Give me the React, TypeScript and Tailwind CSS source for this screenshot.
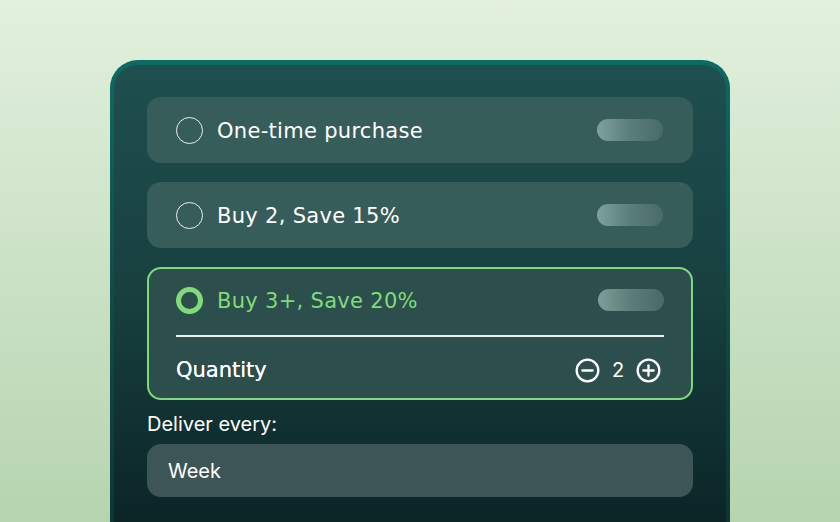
import { useState } from "react";

type Plan = { id: string; label: string };

const plans: Plan[] = [
  { id: "once", label: "One-time purchase" },
  { id: "two", label: "Buy 2, Save 15%" },
  { id: "three", label: "Buy 3+, Save 20%" },
];

function Radio({ active }: { active: boolean }) {
  return active ? (
    <span className="block h-[27px] w-[27px] shrink-0 rounded-full border-[5px] border-[#7fdc78]" />
  ) : (
    <span className="block h-[27px] w-[27px] shrink-0 rounded-full border-[1.5px] border-white/90" />
  );
}

function Shimmer() {
  return (
    <span className="block h-[22px] w-[66px] shrink-0 rounded-full bg-gradient-to-r from-[#86a9a3] via-[#5f827e] to-[#4a6d6a] opacity-90" />
  );
}

function CircleIcon({ plus }: { plus?: boolean }) {
  return (
    <svg width="25" height="25" viewBox="0 0 24 24" fill="none" stroke="white" strokeWidth="2.2" strokeLinecap="round">
      <circle cx="12" cy="12" r="10.4" />
      <path d="M7 12h10" />
      {plus && <path d="M12 7v10" />}
    </svg>
  );
}

export default function App() {
  const [selected, setSelected] = useState("three");
  const [qty, setQty] = useState(2);

  return (
    <main className="min-h-screen h-[522px] overflow-hidden bg-gradient-to-b from-[#e2f0dd] to-[#b6d4b0] px-[110px] pt-[60px] font-['Inter',sans-serif]">
      <div className="h-[480px] rounded-t-[28px] bg-gradient-to-b from-[#0b6b63] via-[#0f4b48] to-[#0d3433] px-[4px] pt-[5px]">
        <div className="flex h-full flex-col gap-[19px] rounded-t-[24px] bg-gradient-to-b from-[#1f4f4f] via-[#173f3e] to-[#0a2325] px-[33px] pt-[32px]">
          {plans.map((p) => {
            const active = p.id === selected;
            if (!active) {
              return (
                <button
                  key={p.id}
                  onClick={() => setSelected(p.id)}
                  className="flex h-[66px] items-center rounded-[14px] bg-[#375d5b] pl-[29px] pr-[30px] text-left"
                >
                  <Radio active={false} />
                  <span className="ml-[14px] flex-1 pt-[3px] font-['DejaVu_Sans',sans-serif] text-[21px] text-white tracking-[0.3px]">
                    {p.label}
                  </span>
                  <Shimmer />
                </button>
              );
            }
            return (
              <div
                key={p.id}
                className="flex flex-col rounded-[14px] border-2 border-[#7fd87a] bg-[#2c4e4c] px-[27px]"
              >
                <div className="flex h-[68px] items-center border-b-2 border-[#e6efe9] pb-[4px]">
                  <Radio active />
                  <span className="ml-[14px] flex-1 pt-[3px] font-['DejaVu_Sans',sans-serif] text-[21px] text-[#7fdc78] tracking-[0.3px]">
                    {p.label}
                  </span>
                  <Shimmer />
                </div>
                <div className="flex h-[61px] items-center justify-between pt-[5px]">
                  <span className="pt-[2px] font-['DejaVu_Sans',sans-serif] text-[21px] text-white [text-shadow:0_0_0.4px_white]">
                    Quantity
                  </span>
                  <div className="flex items-center gap-[11px] pr-[3px]">
                    <button onClick={() => setQty(Math.max(1, qty - 1))}>
                      <CircleIcon />
                    </button>
                    <span className="w-[14px] text-center text-[20px] text-white">{qty}</span>
                    <button onClick={() => setQty(qty + 1)}>
                      <CircleIcon plus />
                    </button>
                  </div>
                </div>
              </div>
            );
          })}
          <div className="-mt-[7px] flex flex-col gap-[8px]">
            <label className="text-[20px] leading-[24px] text-white">Deliver every:</label>
            <div className="flex h-[53px] items-center rounded-[14px] bg-[#3e5556] px-[21px] text-[20px] text-white">
              Week
            </div>
          </div>
        </div>
      </div>
    </main>
  );
}
